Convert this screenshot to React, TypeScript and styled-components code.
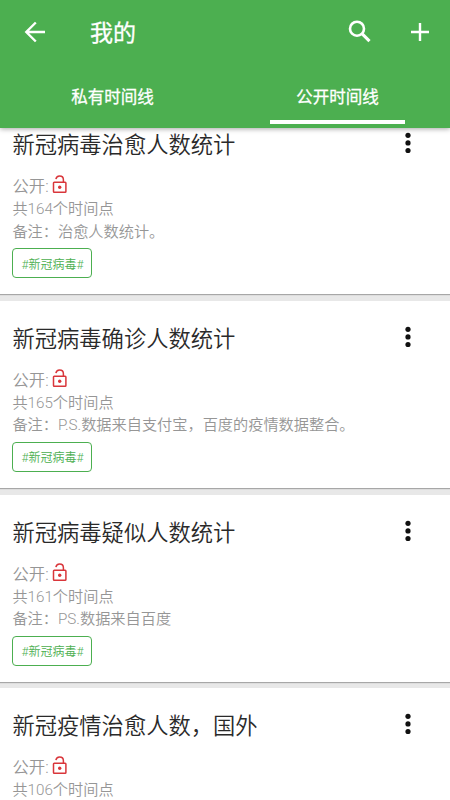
import React from "react";
import styled, { createGlobalStyle } from "styled-components";

const Global = createGlobalStyle`
  * { box-sizing: border-box; }
  html, body { margin: 0; background: #e8e8e8; }
  body { font-family: Roboto, "Noto Sans CJK SC", sans-serif; overflow: hidden; }
  button { font: inherit; color: inherit; background: none; border: 0; padding: 0; }
`;

const Screen = styled.div`
  width: 450px;
  height: 800px;
  display: flex;
  flex-direction: column;
  overflow: hidden;
  background: #e8e8e8;
`;

const Header = styled.header`
  flex: none;
  height: 128px;
  z-index: 1;
  display: flex;
  flex-direction: column;
  background: #4caf50;
  color: #fff;
  box-shadow: 0 1px 5px rgba(0, 0, 0, 0.35);
  -webkit-text-stroke: 0.3px #fff;
`;

const Toolbar = styled.div`
  height: 64px;
  display: flex;
  align-items: center;
  padding: 0 15px 0 20px;
`;

const IconButton = styled.button`
  display: flex;
  width: 30px;
  height: 30px;
`;

const PageTitle = styled.h1`
  flex: 1;
  margin: 3px 0 0 40px;
  font-size: 23px;
  line-height: 32px;
  font-weight: 400;
`;

const Actions = styled.div`
  display: flex;
  gap: 30px;
`;

const Tabs = styled.nav`
  height: 64px;
  display: grid;
  grid-template-columns: 1fr 1fr;
`;

const Tab = styled.button<{ $active?: boolean }>`
  display: flex;
  flex-direction: column;
  align-items: center;
  padding-top: 22px;
  font-size: 16.5px;
  line-height: 24px;
  font-weight: 400;

  &::after {
    content: "";
    width: 135px;
    height: 4px;
    margin-top: 10px;
    background: ${(p) => (p.$active ? "#fff" : "transparent")};
  }
`;

const List = styled.main`
  flex: none;
  display: flex;
  flex-direction: column;
  gap: 6.8px;
  margin-top: -21px;
`;

const Card = styled.article`
  height: 187px;
  flex: none;
  padding: 21px 13px 0 12.4px;
  background: #fff;
  box-shadow: 0 1px 1px rgba(0, 0, 0, 0.28);
`;

const CardHead = styled.div`
  display: flex;
  justify-content: space-between;
  padding-right: 26.4px;
`;

const CardTitle = styled.h2`
  margin: 1px 0 0;
  font-size: 22.3px;
  line-height: 33px;
  font-weight: 350;
  color: #2a2a2a;
`;

const MoreButton = styled.button`
  display: flex;
  width: 6px;
  height: 30px;
`;

const Visibility = styled.div`
  display: flex;
  align-items: center;
  height: 24px;
  margin-top: 11px;
  font-size: 16.4px;
  font-weight: 350;
  color: #969696;
`;

const Detail = styled.p<{ $first?: boolean }>`
  margin: ${(p) => (p.$first ? "1px 0 0" : "0")};
  font-size: 15.2px;
  line-height: 22.5px;
  font-weight: 350;
  color: #969696;
  white-space: nowrap;
`;

const Tag = styled.button`
  display: block;
  width: 80px;
  height: 30px;
  margin-top: 5px;
  border: 1px solid #4caf50;
  border-radius: 4px;
  font-size: 12px;
  font-weight: 350;
  color: #4caf50;
`;

const BackIcon = () => (
  <svg width="30" height="30" viewBox="0 0 30 30" fill="none" stroke="#fff" strokeWidth="2.4">
    <path d="M25 15H7M15.8 5.5L6.3 15L15.8 24.5" />
  </svg>
);

const SearchIcon = () => (
  <svg width="30" height="30" viewBox="0 0 30 30" fill="none" stroke="#fff">
    <circle cx="12" cy="11.7" r="7" strokeWidth="2.6" />
    <path d="M17 16.7L24.5 24.2" strokeWidth="3.1" />
  </svg>
);

const PlusIcon = () => (
  <svg width="30" height="30" viewBox="0 0 30 30" fill="none" stroke="#fff" strokeWidth="2.4">
    <path d="M15 6V24M6 15H24" />
  </svg>
);

const MoreIcon = () => (
  <svg width="6" height="30" viewBox="0 0 6 30" fill="#111">
    <circle cx="3" cy="7.3" r="2.6" />
    <circle cx="3" cy="14.9" r="2.6" />
    <circle cx="3" cy="22.5" r="2.6" />
  </svg>
);

const UnlockedIcon = () => (
  <svg width="20" height="22" viewBox="0 0 20 22" fill="none" stroke="#d9363b" strokeWidth="1.5">
    <rect x="4.5" y="8.2" width="12.4" height="10" rx="0.8" />
    <path d="M6.9 5.2C7.2 3.2 8.7 2 10.6 2C12.8 2 14.4 3.6 14.4 5.7V8.2" />
    <circle cx="10.7" cy="13.2" r="1.7" fill="#d9363b" stroke="none" />
  </svg>
);

const timelines = [
  { title: "新冠病毒治愈人数统计", count: 164, note: "治愈人数统计。" },
  { title: "新冠病毒确诊人数统计", count: 165, note: "P.S.数据来自支付宝，百度的疫情数据整合。" },
  { title: "新冠病毒疑似人数统计", count: 161, note: "PS.数据来自百度" },
  { title: "新冠疫情治愈人数，国外", count: 106, note: "" },
];

export default function App() {
  return (
    <Screen>
      <Global />
      <Header>
        <Toolbar>
          <IconButton aria-label="返回"><BackIcon /></IconButton>
          <PageTitle>我的</PageTitle>
          <Actions>
            <IconButton aria-label="搜索"><SearchIcon /></IconButton>
            <IconButton aria-label="添加"><PlusIcon /></IconButton>
          </Actions>
        </Toolbar>
        <Tabs>
          <Tab>私有时间线</Tab>
          <Tab $active>公开时间线</Tab>
        </Tabs>
      </Header>
      <List>
        {timelines.map((t) => (
          <Card key={t.title}>
            <CardHead>
              <CardTitle>{t.title}</CardTitle>
              <MoreButton aria-label="更多"><MoreIcon /></MoreButton>
            </CardHead>
            <Visibility>公开:<UnlockedIcon /></Visibility>
            <Detail $first>共{t.count}个时间点</Detail>
            {t.note && <Detail>备注：{t.note}</Detail>}
            {t.note && <Tag>#新冠病毒#</Tag>}
          </Card>
        ))}
      </List>
    </Screen>
  );
}
